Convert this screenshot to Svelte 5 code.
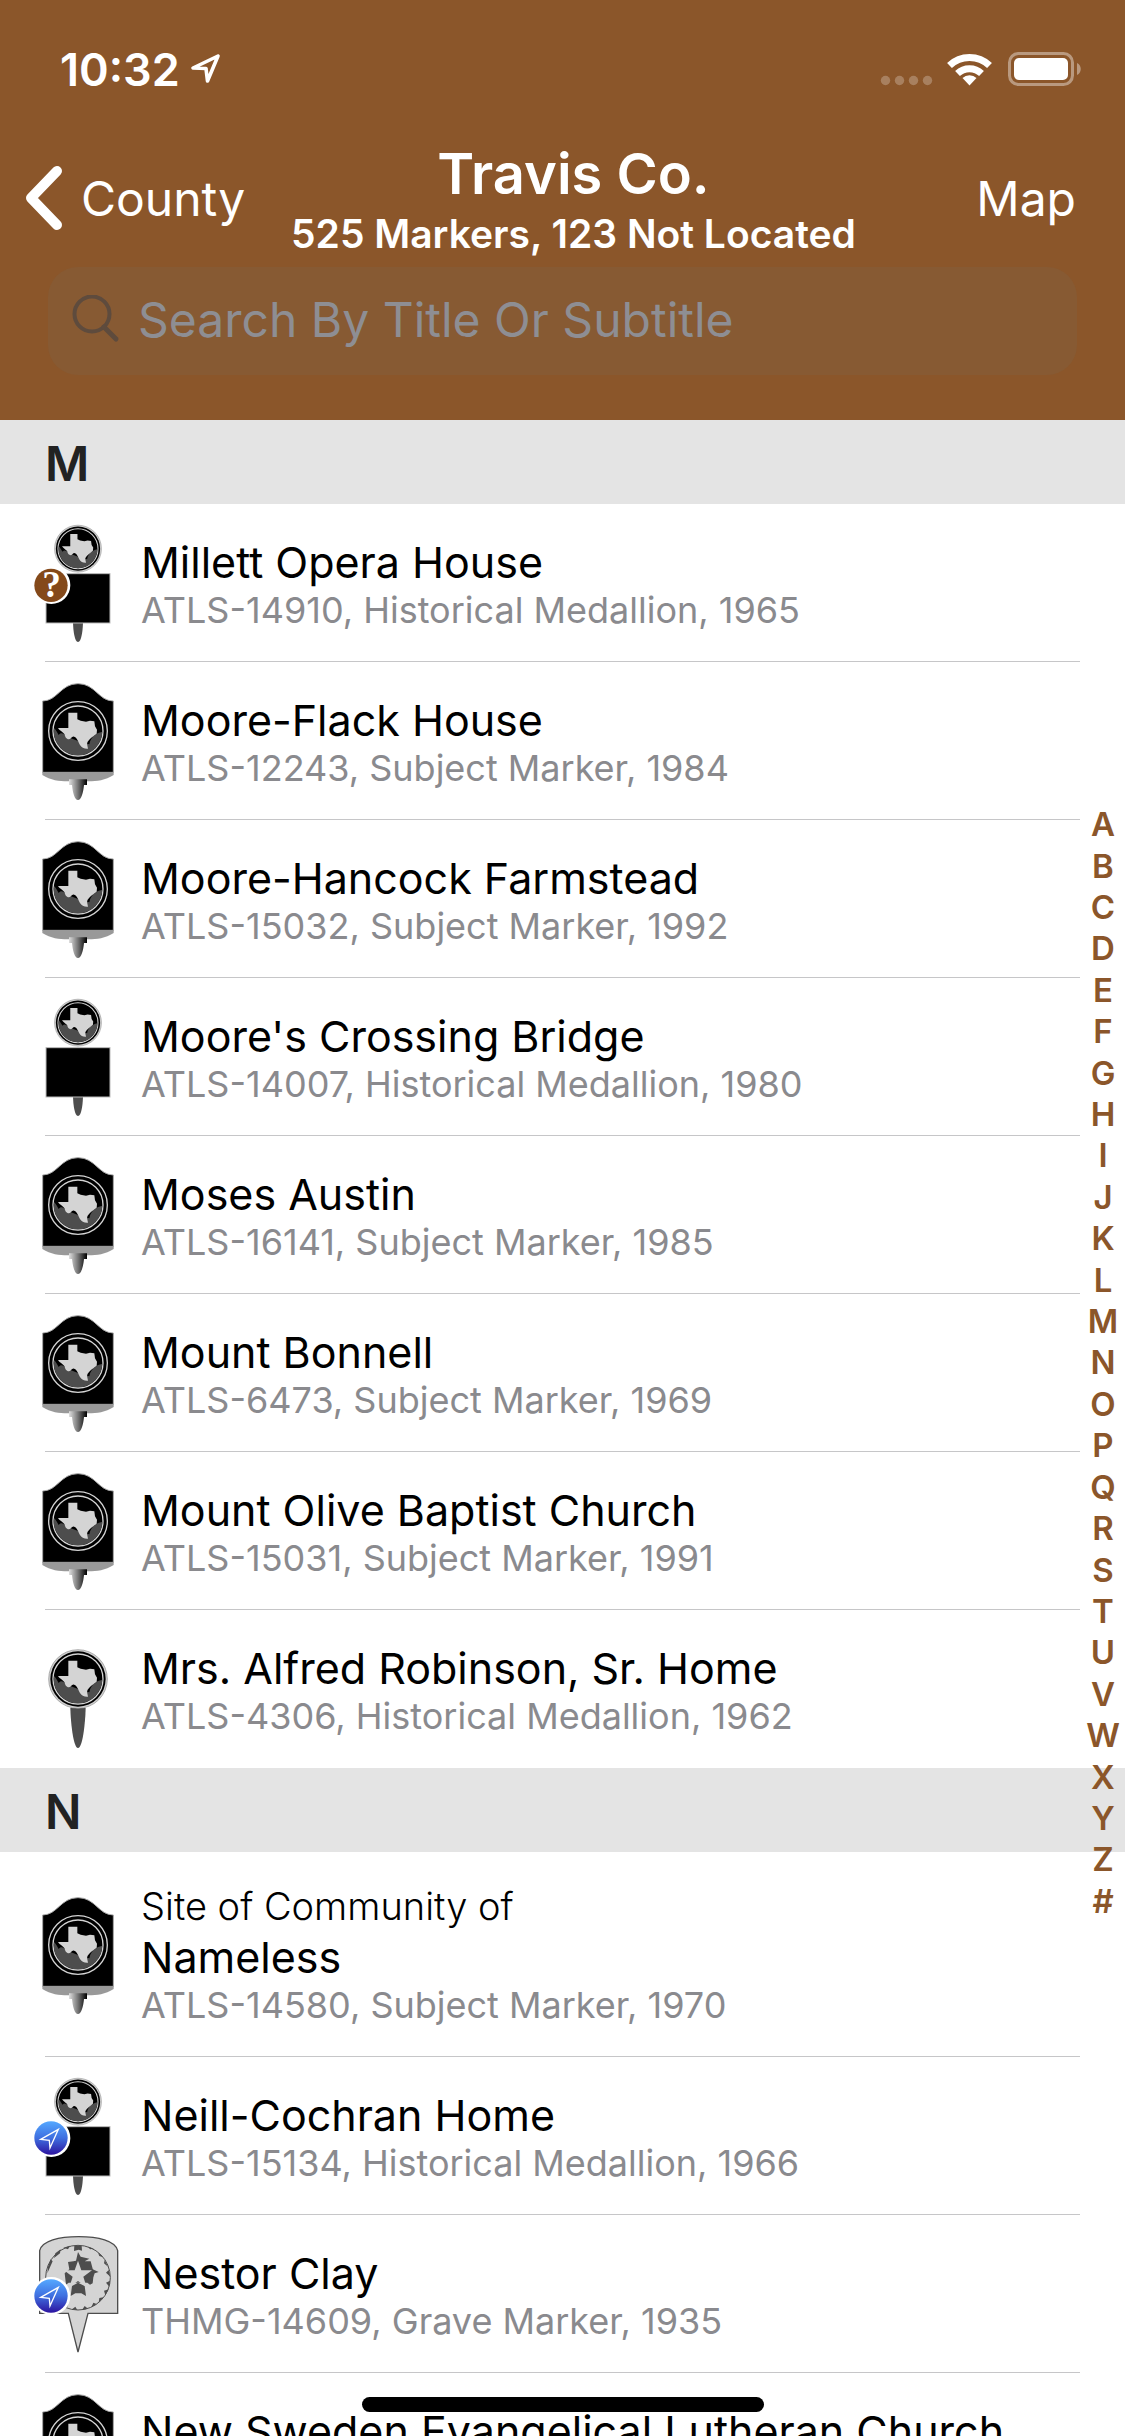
<script lang="ts">
    type Marker = {
        prefix?: string;
        title: string;
        detail: string;
        icon: 'subject' | 'medallion' | 'plate' | 'grave';
        badge?: 'unknown' | 'located';
    };

    type Section = { letter: string; markers: Marker[] };

    const sections: Section[] = [
        {
            letter: 'M',
            markers: [
                { title: 'Millett Opera House', detail: 'ATLS-14910, Historical Medallion, 1965', icon: 'plate', badge: 'unknown' },
                { title: 'Moore-Flack House', detail: 'ATLS-12243, Subject Marker, 1984', icon: 'subject' },
                { title: 'Moore-Hancock Farmstead', detail: 'ATLS-15032, Subject Marker, 1992', icon: 'subject' },
                { title: "Moore's Crossing Bridge", detail: 'ATLS-14007, Historical Medallion, 1980', icon: 'plate' },
                { title: 'Moses Austin', detail: 'ATLS-16141, Subject Marker, 1985', icon: 'subject' },
                { title: 'Mount Bonnell', detail: 'ATLS-6473, Subject Marker, 1969', icon: 'subject' },
                { title: 'Mount Olive Baptist Church', detail: 'ATLS-15031, Subject Marker, 1991', icon: 'subject' },
                { title: 'Mrs. Alfred Robinson, Sr. Home', detail: 'ATLS-4306, Historical Medallion, 1962', icon: 'medallion' }
            ]
        },
        {
            letter: 'N',
            markers: [
                { prefix: 'Site of Community of', title: 'Nameless', detail: 'ATLS-14580, Subject Marker, 1970', icon: 'subject' },
                { title: 'Neill-Cochran Home', detail: 'ATLS-15134, Historical Medallion, 1966', icon: 'plate', badge: 'located' },
                { title: 'Nestor Clay', detail: 'THMG-14609, Grave Marker, 1935', icon: 'grave', badge: 'located' },
                { title: 'New Sweden Evangelical Lutheran Church', detail: '', icon: 'subject' }
            ]
        }
    ];

    const letters = [...'ABCDEFGHIJKLMNOPQRSTUVWXYZ#'];

    let query = $state('');
</script>

<svg class="defs" aria-hidden="true">
    <defs>
        <linearGradient id="spike">
            <stop offset="0" stop-color="#e0e0e0" />
            <stop offset="0.45" stop-color="#808080" />
            <stop offset="1" stop-color="#000" />
        </linearGradient>
        <linearGradient id="located" x2="0" y2="1">
            <stop offset="0" stop-color="#55a8ff" />
            <stop offset="0.5" stop-color="#3f6fe0" />
            <stop offset="1" stop-color="#2c14a0" />
        </linearGradient>
        <clipPath id="sealclip"><circle r="73" /></clipPath>
    </defs>
</svg>

{#snippet seal(x: number, y: number, scale: number, rim: boolean)}
    <g transform="translate({x} {y}) scale({scale})">
        {#if rim}
            <circle r="88" fill="#d0d0d0" stroke="#909090" stroke-width="2" />
            <circle r="83" fill="#000" />
        {:else}
            <circle r="88" fill="#000" stroke="#d4d4d4" stroke-width="4" />
        {/if}
        <circle r="75" fill="#000" stroke="#d4d4d4" stroke-width="4" />
        <path
            clip-path="url(#sealclip)"
            fill="#4d4d4d"
            d="M-76 -12C-66 -6 -62 6 -58 12C-52 4 -44 6 -36 16L0 30L34 40C36 26 44 16 52 12C60 4 66 4 76 2V80H-76Z"
        />
        <path
            fill="#d4d4d4"
            d="M-29 -55H-2V-35L8 -31L24 -28L36 -31L49 -29L51 -14L57 -4L56 8L46 16C36 23 28 31 27 38L30 53C20 54 10 50 6 42C2 34 -4 18 -12 17C-19 15 -20 24 -27 25C-36 24 -38 18 -41 9C-46 3 -56 -2 -60 -9H-29Z"
        />
    </g>
{/snippet}

<div class="screen">
    <header>
        <div class="status">
            <div class="clock">
                <time>10:32</time>
                <svg width="32" height="32" viewBox="0 0 32 32" aria-hidden="true">
                    <path d="M28 3L3 15L16 15.500L17.500 28Z" fill="none" stroke="#fff" stroke-width="3.600" stroke-linejoin="round" />
                </svg>
            </div>
            <svg width="204" height="36" viewBox="0 0 204 36" aria-hidden="true">
                <g fill="#fff" fill-opacity="0.25">
                    <circle cx="8.500" cy="29.500" r="4.700" />
                    <circle cx="22.500" cy="29.500" r="4.700" />
                    <circle cx="36.500" cy="29.500" r="4.700" />
                    <circle cx="50.500" cy="29.500" r="4.700" />
                </g>
                <g fill="none" stroke="#fff" stroke-width="7">
                    <path d="M72.500 14.500A29 29 0 0 1 112.500 14.500" />
                    <path d="M80.500 22.500A17.500 17.500 0 0 1 104.500 22.500" />
                </g>
                <path d="M92.500 34.500L85.500 27A10 10 0 0 1 99.500 27Z" fill="#fff" />
                <rect x="132.500" y="2.500" width="63" height="31" rx="9" fill="none" stroke="#fff" stroke-opacity="0.400" stroke-width="3" />
                <rect x="137" y="7" width="54" height="22" rx="5" fill="#fff" />
                <path d="M200 12C205 14 205 22 200 24Z" fill="#fff" fill-opacity="0.400" />
            </svg>
        </div>

        <nav>
            <button class="back" type="button">
                <svg width="38" height="64" viewBox="0 0 38 64" aria-hidden="true">
                    <path d="M32 5L6 32L32 59" fill="none" stroke="#fff" stroke-width="10" stroke-linecap="round" stroke-linejoin="round" />
                </svg>
                County
            </button>
            <div class="heading">
                <h1>Travis Co.</h1>
                <p>525 Markers, 123 Not Located</p>
            </div>
            <button class="map" type="button">Map</button>
        </nav>

        <label class="search">
            <svg width="48" height="50" viewBox="0 0 48 50" aria-hidden="true">
                <g fill="none" stroke="#5e4b3d" stroke-width="4">
                    <circle cx="20" cy="19" r="17.500" />
                    <path d="M32 32L44 44" stroke-width="5" stroke-linecap="round" />
                </g>
            </svg>
            <input type="text" bind:value={query} placeholder="Search By Title Or Subtitle" aria-label="Search By Title Or Subtitle" />
        </label>
    </header>

    <main>
        {#each sections as section}
            <section>
                <h2>{section.letter}</h2>
                <ul>
                    {#each section.markers as marker}
                        <li>
                            <svg class="marker" width="96" height="120" viewBox="0 0 288 360" aria-hidden="true">
                                {#if marker.icon === 'subject'}
                                    <path d="M38 60C82 60 92 8 144 8S206 60 250 60V274H38Z" fill="#000" stroke="#a8a8a8" stroke-width="3" />
                                    <path d="M37 273H251V282C226 298 200 301 176 301H112C88 301 62 298 37 282Z" fill="#999" />
                                    <path d="M117 295H171V312H162C160 334 154 357 144 357S128 334 126 312H117Z" fill="url(#spike)" />
                                    {@render seal(144, 150, 1, false)}
                                {:else if marker.icon === 'medallion'}
                                    <path d="M121 236H167C166 280 158 357 144 357S122 280 121 236Z" fill="#4d4d4d" />
                                    {@render seal(144, 150, 1, true)}
                                {:else if marker.icon === 'plate'}
                                    <path d="M129 300H159C158 325 154 357 144 357S130 325 129 300Z" fill="#4d4d4d" />
                                    <rect x="48" y="152" width="192" height="148" fill="#000" stroke="#bbb" stroke-width="3" />
                                    {@render seal(144, 77, 0.8, true)}
                                {:else}
                                    <path
                                        d="M29 238V50C36 20 88 8 146 8S256 20 263 50V238H174L144 354L115 238Z"
                                        fill="#d4d4d4"
                                        stroke="#4d4d4d"
                                        stroke-width="4"
                                    />
                                    <circle cx="144" cy="131" r="97" fill="none" stroke="#4d4d4d" stroke-width="3" />
                                    <g fill="#4d4d4d">
                                        <path d="M133 35L155 35L156 50L146 47L132 51Z" />
                                        <path d="M138 80L144 54L152 68L178 74L164 82L182 82L188 104L192 112L188 148L180 152L172 146H116L108 152L104 118L118 106L114 84L130 82Z" />
                                        <path d="M54 98L62 76L68 82L60 100L52 118ZM76 58L92 46L90 58L72 72ZM100 41L120 35L114 46ZM174 38L192 44L180 46ZM204 56L220 70L208 66ZM224 78L234 98L222 88ZM236 108L241 128L228 116ZM240 140L238 158L228 146ZM236 166L226 184L222 170ZM220 190L206 206L208 192ZM200 210L184 220L190 206ZM174 224L156 228L164 216ZM142 228L126 226L136 218ZM112 220L98 210L112 212Z" />
                                        <path d="M188 106L206 114L194 118L190 130Z" />
                                        <path d="M122 186L126 156L144 146L164 156L168 186L154 178H136Z" />
                                    </g>
                                    <path d="M144 80L154 109H186L160 128L170 160L144 141L118 160L128 128L102 109H134Z" fill="#d4d4d4" />
                                {/if}
                                {#if marker.badge}
                                    <circle cx="64" cy="186" r="57" fill="#fff" />
                                {/if}
                                {#if marker.badge === 'unknown'}
                                    <circle cx="63" cy="187" r="50" fill="#84491a" />
                                    <text x="65" y="223" text-anchor="middle">?</text>
                                {:else if marker.badge === 'located'}
                                    <circle cx="63" cy="186" r="50" fill="url(#located)" />
                                    <path d="M85 160L32 190L58 193L60 216Z" fill="none" stroke="#fff" stroke-width="4" />
                                {/if}
                            </svg>
                            <div class="text">
                                {#if marker.prefix}
                                    <p class="prefix">{marker.prefix}</p>
                                {/if}
                                <h3>{marker.title}</h3>
                                <p class="detail">{marker.detail}</p>
                            </div>
                        </li>
                    {/each}
                </ul>
            </section>
        {/each}
    </main>

    <div class="index">
        <ol>
            {#each letters as letter}
                <li>{letter}</li>
            {/each}
        </ol>
    </div>

    <div class="home"></div>
</div>

<style>
    :global(body) {
        margin: 0;
        background: #fff;
    }

    h1,
    h2,
    h3,
    p,
    ul,
    ol {
        margin: 0;
        padding: 0;
        list-style: none;
    }

    .defs {
        position: absolute;
        width: 0;
        height: 0;
    }

    .screen {
        position: relative;
        display: flex;
        flex-direction: column;
        height: 100vh;
        overflow: hidden;
        background: #fff;
        color: #000;
        font-family: Inter, "Liberation Sans", sans-serif;
    }

    header {
        flex: none;
        padding-bottom: 45px;
        background: #8b562a;
        color: #fff;
    }

    .status {
        display: flex;
        align-items: center;
        justify-content: space-between;
        height: 138px;
        padding: 0 44px 0 60px;
    }

    .clock {
        display: flex;
        align-items: center;
        gap: 10px;
        font-size: 45px;
        font-weight: 600;
    }

    nav {
        display: grid;
        grid-template-columns: 1fr auto 1fr;
        align-items: center;
        padding: 0 25px;
    }

    button {
        padding: 0;
        border: 0;
        background: none;
        color: inherit;
        font-family: inherit;
        font-size: 48px;
    }

    .back {
        display: flex;
        align-items: center;
        gap: 18px;
        justify-self: start;
    }

    .map {
        justify-self: end;
        padding-right: 24px;
    }

    .heading {
        padding-left: 22px;
        text-align: center;
    }

    h1 {
        font-size: 56px;
        font-weight: 600;
        line-height: 72px;
    }

    .heading p {
        font-size: 39px;
        font-weight: 600;
        line-height: 48px;
    }

    .search {
        display: flex;
        align-items: center;
        gap: 18px;
        height: 108px;
        margin: 9px 48px 0;
        padding: 0 24px 3px;
        border-radius: 30px;
        background: #875a33;
        box-sizing: border-box;
    }

    input {
        flex: 1;
        min-width: 0;
        padding: 0;
        border: 0;
        outline: 0;
        background: none;
        color: #fff;
        font-family: inherit;
        font-size: 48px;
    }

    input::placeholder {
        color: #8e8e93;
        opacity: 1;
    }

    main {
        flex: 1;
        min-height: 0;
        overflow: hidden;
    }

    h2 {
        padding: 4px 45px 0;
        background: #e4e4e4;
        color: #222;
        font-size: 48px;
        font-weight: 600;
        line-height: 80px;
    }

    ul li {
        display: flex;
        align-items: center;
        gap: 15px;
        margin: 0 45px;
        padding: 31px 0 30px;
        border-bottom: 1px solid #c6c6c8;
    }

    ul li:last-child {
        border-color: transparent;
    }

    .marker {
        flex: none;
        margin: -12px 0 -12px -15px;
    }

    .marker text {
        fill: #fff;
        font: bold 112px "Liberation Serif", serif;
    }

    .text {
        min-width: 0;
        white-space: nowrap;
    }

    .prefix {
        font-size: 38px;
        font-weight: 300;
        line-height: 47px;
    }

    h3 {
        font-size: 43px;
        font-weight: 400;
        line-height: 54px;
    }

    .detail {
        min-height: 42px;
        color: #8a8a8e;
        font-size: 36px;
        line-height: 42px;
    }

    .index {
        position: absolute;
        top: 420px;
        right: 0;
        bottom: 131px;
        display: flex;
        align-items: center;
    }

    ol {
        display: flex;
        flex-direction: column;
        width: 44px;
        height: 1118px;
        color: #8b562a;
        font-size: 33px;
        font-weight: 600;
        text-align: center;
    }

    ol li {
        display: flex;
        flex: 1;
        align-items: center;
        justify-content: center;
    }

    .home {
        position: absolute;
        bottom: 24px;
        left: 50%;
        width: 402px;
        height: 15px;
        border-radius: 8px;
        background: #000;
        transform: translateX(-50%);
    }
</style>
